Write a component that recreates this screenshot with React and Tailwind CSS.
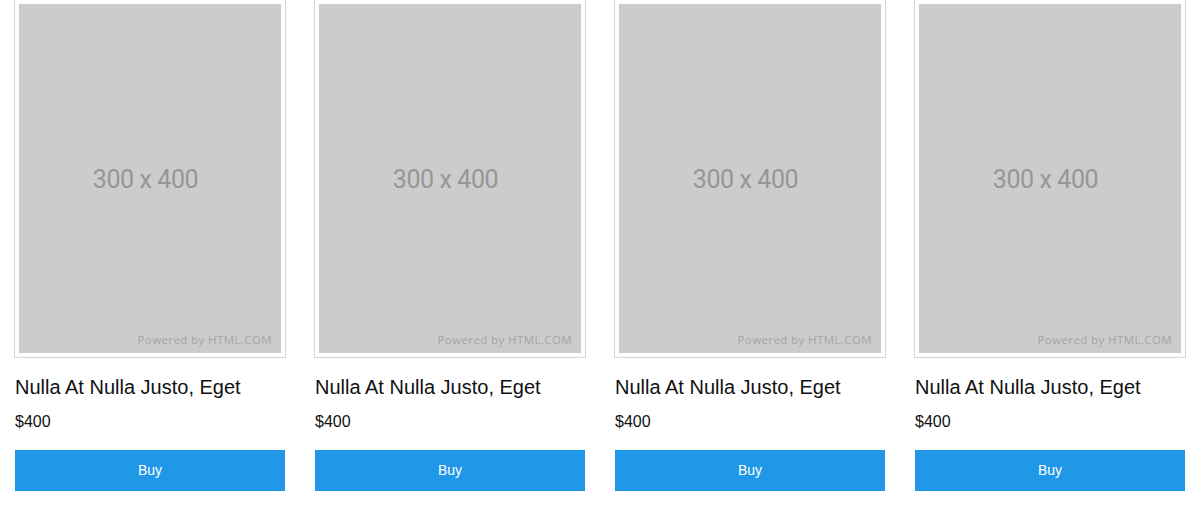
export default function App() {
  const items = [1, 2, 3, 4];
  return (
    <div className="min-h-screen bg-white" style={{ fontFamily: '"Liberation Sans", Arial, sans-serif' }}>
      <div className="grid grid-cols-4 -mt-px">
        {items.map((i) => (
          <div key={i} className="px-[15px]">
            <div className="-mx-px border border-[#d4d4d4] p-[4px]">
              <div className="relative h-[349px] bg-[#cccccc] flex items-center justify-center pr-[9px]">
                <span
                  className="text-[25px] tracking-[-0.4px] text-[#969696] pt-[2px]"
                  style={{ fontFamily: 'Roboto, sans-serif' }}
                >
                  300 x 400
                </span>
                <span
                  className="absolute right-[9px] bottom-[5px] text-[11.5px] tracking-[0.4px] text-[#a4a4a4]"
                  style={{ fontFamily: '"Open Sans", sans-serif' }}
                >
                  Powered by HTML.COM
                </span>
              </div>
            </div>
            <h3 className="mt-[17px] text-[20px] leading-[24px] text-[#111]">Nulla At Nulla Justo, Eget</h3>
            <p className="mt-[11px] text-[16px] leading-[24px] text-[#111]">$400</p>
            <button className="mt-[16px] w-full h-[41px] bg-[#2197e7] text-white text-[14px]">Buy</button>
          </div>
        ))}
      </div>
    </div>
  );
}
